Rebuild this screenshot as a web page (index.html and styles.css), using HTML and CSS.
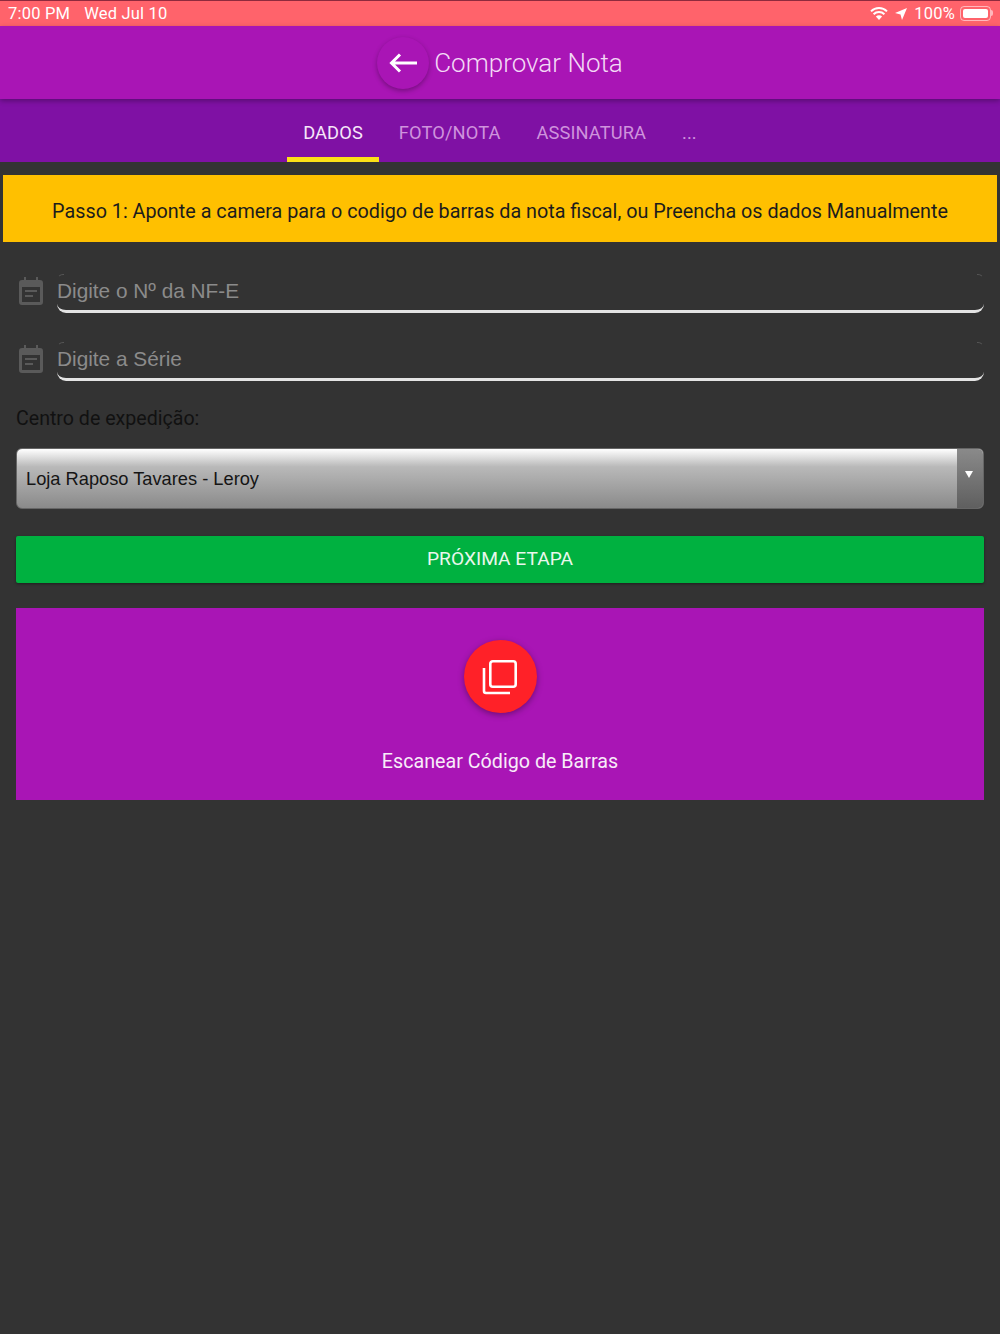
FILE: index.html
```html
<!DOCTYPE html>
<html lang="pt">
<head>
	<meta charset="utf-8">
	<title>Comprovar Nota</title>
	<link rel="stylesheet" href="styles.css">
</head>
<body>
	<div class="status">
		<span class="status-left">7:00 PM<span class="status-date">Wed Jul 10</span></span>
		<span class="status-right">
			<svg class="wifi" width="18" height="13" viewBox="0 0 18 13"><path d="M9 13 5.9 9.6a4.4 4.4 0 0 1 6.2 0z" fill="#fff"/><path d="M3.6 7.2a7.7 7.7 0 0 1 10.800 0M1 4.400a11.400 11.400 0 0 1 16 0" fill="none" stroke="#fff" stroke-width="2"/></svg>
			<svg class="arrow" width="12" height="12" viewBox="0 0 12 12"><path d="M12 0 7 12 5.500 6.500 0 5z" fill="#fff"/></svg>
			<span>100%</span>
			<span class="battery"><span class="battery-fill"></span></span>
		</span>
	</div>

	<header class="appbar">
		<button class="back">
			<svg width="28" height="22" viewBox="0 0 28 22"><path d="M11 2.500 2.500 11l8.500 8.500M3 11h25" fill="none" stroke="#fff" stroke-width="3"/></svg>
		</button>
		<span class="title">Comprovar Nota</span>
	</header>

	<nav class="tabs">
		<a class="tab active">DADOS</a>
		<a class="tab">FOTO/NOTA</a>
		<a class="tab">ASSINATURA</a>
		<a class="tab">...</a>
	</nav>

	<div class="notice">Passo 1: Aponte a camera para o codigo de barras da nota fiscal, ou Preencha os dados Manualmente</div>

	<main class="content">
		<div class="field">
			<svg class="field-icon" width="24" height="28" viewBox="0 0 24 28"><path fill-rule="evenodd" d="M5 0h2v3h10V0h2v3h2a3 3 0 0 1 3 3v19a3 3 0 0 1-3 3H3a3 3 0 0 1-3-3V6a3 3 0 0 1 3-3h2zM3 10v15h18V10zm3 3h12v2H6zm0 5h8v2H6z" fill="#5a5a5a"/></svg>
			<div class="input">Digite o Nº da NF-E</div>
		</div>
		<div class="field">
			<svg class="field-icon" width="24" height="28" viewBox="0 0 24 28"><path fill-rule="evenodd" d="M5 0h2v3h10V0h2v3h2a3 3 0 0 1 3 3v19a3 3 0 0 1-3 3H3a3 3 0 0 1-3-3V6a3 3 0 0 1 3-3h2zM3 10v15h18V10zm3 3h12v2H6zm0 5h8v2H6z" fill="#5a5a5a"/></svg>
			<div class="input">Digite a Série</div>
		</div>

		<label class="select-label">Centro de expedição:</label>
		<div class="select">
			<span class="select-value">Loja Raposo Tavares - Leroy</span>
			<span class="select-arrow"></span>
		</div>

		<button class="next">PRÓXIMA ETAPA</button>

		<section class="scan">
			<button class="scan-btn">
				<svg width="36" height="36" viewBox="0 0 36 36"><path d="M2 9v23a2 2 0 0 0 2 2h24" fill="none" stroke="#fff" stroke-width="2.6"/><rect x="8.3" y="2.3" width="25.4" height="25.4" rx="2.5" fill="none" stroke="#fff" stroke-width="2.6"/></svg>
			</button>
			<p class="scan-text">Escanear Código de Barras</p>
		</section>
	</main>
</body>
</html>
```

FILE: styles.css
```css
* {
	box-sizing: border-box;
}

html,
body {
	margin: 0;
	height: 100%;
}

body {
	background: #333333;
	font-family: Roboto, sans-serif;
	overflow: hidden;
}

button {
	border: 0;
	padding: 0;
	font-family: inherit;
}

.status {
	display: flex;
	justify-content: space-between;
	align-items: center;
	height: 26px;
	padding: 0 7px 0 8px;
	background: #ff636b;
	border-top: 1px solid #8f2a3d;
	color: #fff;
	font-size: 16.5px;
	letter-spacing: 0.2px;
}

.status-date {
	margin-left: 14px;
}

.status-right {
	display: flex;
	align-items: center;
	gap: 7px;
}

.battery {
	position: relative;
	display: block;
	width: 31px;
	height: 15px;
	margin: 0 2px 0 -2px;
	padding: 2px;
	border: 1px solid rgba(255, 255, 255, 0.55);
	border-radius: 4px;
}

.battery::after {
	content: "";
	position: absolute;
	top: 3px;
	right: -3px;
	width: 2px;
	height: 6px;
	background: rgba(255, 255, 255, 0.55);
	border-radius: 0 2px 2px 0;
}

.battery-fill {
	display: block;
	height: 100%;
	background: #fff;
	border-radius: 2px;
}

.appbar {
	position: relative;
	z-index: 1;
	display: flex;
	justify-content: center;
	align-items: center;
	gap: 5px;
	height: 73px;
	padding-top: 1px;
	background: #a915b5;
	box-shadow: 0 2px 5px rgba(0, 0, 0, 0.3);
}

.back {
	display: flex;
	justify-content: center;
	align-items: center;
	width: 52px;
	height: 52px;
	background: #a915b5;
	border-radius: 50%;
	box-shadow: 0 2px 5px rgba(0, 0, 0, 0.3);
}

.title {
	color: #f3d9f5;
	font-size: 26px;
	font-weight: 300;
}

.tabs {
	display: flex;
	justify-content: center;
	height: 63px;
	background: #7f11a4;
}

.tab {
	display: flex;
	align-items: center;
	padding: 9px 16px 0;
	margin: 0 2px;
	color: #cf93dd;
	font-size: 18.3px;
	letter-spacing: 0.1px;
	border-bottom: 5px solid transparent;
}

.tab.active {
	color: #f6e6f9;
	border-bottom-color: #fce017;
}

.notice {
	margin: 13px 3px 0;
	height: 67px;
	line-height: 74px;
	background: #ffc000;
	color: #1c1c1c;
	font-size: 19.77px;
	text-align: center;
}

.content {
	padding: 0 16px;
}

.field {
	display: flex;
	align-items: flex-start;
	gap: 14px;
	height: 68px;
	padding-top: 32px;
}

.field-icon {
	flex: none;
	margin: 3px 0 0 3px;
}

.input {
	position: relative;
	flex: 1;
	height: 39px;
	padding-top: 5px;
	border-bottom: 3px solid #e4e4e4;
	border-radius: 0 0 9px 9px;
	color: #8b8b8b;
	font-family: "Liberation Sans", sans-serif;
	font-size: 20.8px;
}

.input::before,
.input::after {
	content: "";
	position: absolute;
	top: 0;
	width: 6px;
	height: 6px;
	border-top: 1px solid #555;
}

.input::before {
	left: 0;
	border-left: 1px solid transparent;
	border-radius: 6px 0 0 0;
}

.input::after {
	right: 0;
	border-right: 1px solid transparent;
	border-radius: 0 6px 0 0;
}

.select-label {
	display: block;
	margin-top: 29px;
	color: #111;
	font-size: 19.6px;
}

.select {
	display: flex;
	justify-content: space-between;
	align-items: center;
	height: 61px;
	margin-top: 18px;
	background: linear-gradient(#fff, #b9b9b9 30%, #8a8a8a);
	border: 1px solid #666;
	border-radius: 6px;
	overflow: hidden;
}

.select-value {
	padding: 0 0 0 9px;
	color: #151515;
	font-family: "Liberation Sans", sans-serif;
	font-size: 18.25px;
}

.select-arrow {
	position: relative;
	width: 26px;
	height: 100%;
	background: linear-gradient(#8a8a8a, #5f5f5f);
}

.select-arrow::after {
	content: "";
	position: absolute;
	top: 22px;
	left: 8px;
	border-top: 7px solid #fff;
	border-left: 4.5px solid transparent;
	border-right: 4.5px solid transparent;
}

.next {
	display: block;
	width: 100%;
	height: 47px;
	margin-top: 27px;
	padding-bottom: 2px;
	background: #00b140;
	border-radius: 2px;
	color: #e9f7ec;
	font-size: 19.2px;
	box-shadow: 0 1px 3px rgba(0, 0, 0, 0.4);
}

.scan {
	display: flex;
	flex-direction: column;
	align-items: center;
	height: 192px;
	margin-top: 25px;
	padding-top: 32px;
	background: #a915b5;
}

.scan-btn {
	display: flex;
	justify-content: center;
	align-items: center;
	width: 73px;
	height: 73px;
	background: #ff2128;
	border-radius: 50%;
	box-shadow: 0 2px 6px rgba(0, 0, 0, 0.35);
}

.scan-text {
	margin: 37px 0 0;
	color: #f8ecf9;
	font-size: 19.7px;
}
```
